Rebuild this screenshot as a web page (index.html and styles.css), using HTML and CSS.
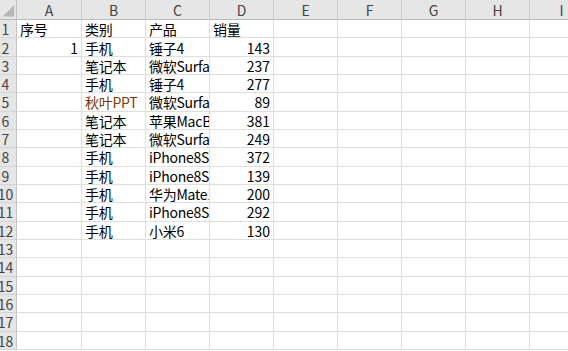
FILE: index.html
```html
<!DOCTYPE html>
<html lang="zh-CN">
<head>
<meta charset="utf-8">
<title>Sheet</title>
<link rel="stylesheet" href="styles.css">
</head>
<body>
<div class="sheet">
  <div class="row head">
    <div class="corner"><svg width="17" height="19" viewBox="0 0 17 19"><polygon points="3,17 15,17 15,5" fill="#b7b7b7"/></svg></div>
    <div class="ch">A</div><div class="ch">B</div><div class="ch">C</div><div class="ch">D</div><div class="ch">E</div><div class="ch">F</div><div class="ch">G</div><div class="ch">H</div><div class="ch">I</div>
  </div>
  <div class="row"><div class="rh">1</div><div class="c">序号</div><div class="c">类别</div><div class="c">产品</div><div class="c">销量</div><div class="c"></div><div class="c"></div><div class="c"></div><div class="c"></div><div class="c"></div></div>
  <div class="row"><div class="rh">2</div><div class="c num">1</div><div class="c">手机</div><div class="c">锤子4</div><div class="c num">143</div><div class="c"></div><div class="c"></div><div class="c"></div><div class="c"></div><div class="c"></div></div>
  <div class="row"><div class="rh">3</div><div class="c"></div><div class="c">笔记本</div><div class="c">微软Surface</div><div class="c num">237</div><div class="c"></div><div class="c"></div><div class="c"></div><div class="c"></div><div class="c"></div></div>
  <div class="row"><div class="rh">4</div><div class="c"></div><div class="c">手机</div><div class="c">锤子4</div><div class="c num">277</div><div class="c"></div><div class="c"></div><div class="c"></div><div class="c"></div><div class="c"></div></div>
  <div class="row"><div class="rh">5</div><div class="c"></div><div class="c brown">秋叶PPT</div><div class="c">微软Surface</div><div class="c num">89</div><div class="c"></div><div class="c"></div><div class="c"></div><div class="c"></div><div class="c"></div></div>
  <div class="row"><div class="rh">6</div><div class="c"></div><div class="c">笔记本</div><div class="c">苹果MacBook</div><div class="c num">381</div><div class="c"></div><div class="c"></div><div class="c"></div><div class="c"></div><div class="c"></div></div>
  <div class="row"><div class="rh">7</div><div class="c"></div><div class="c">笔记本</div><div class="c">微软Surface</div><div class="c num">249</div><div class="c"></div><div class="c"></div><div class="c"></div><div class="c"></div><div class="c"></div></div>
  <div class="row"><div class="rh">8</div><div class="c"></div><div class="c">手机</div><div class="c">iPhone8S</div><div class="c num">372</div><div class="c"></div><div class="c"></div><div class="c"></div><div class="c"></div><div class="c"></div></div>
  <div class="row"><div class="rh">9</div><div class="c"></div><div class="c">手机</div><div class="c">iPhone8S</div><div class="c num">139</div><div class="c"></div><div class="c"></div><div class="c"></div><div class="c"></div><div class="c"></div></div>
  <div class="row"><div class="rh">10</div><div class="c"></div><div class="c">手机</div><div class="c">华为Mate10</div><div class="c num">200</div><div class="c"></div><div class="c"></div><div class="c"></div><div class="c"></div><div class="c"></div></div>
  <div class="row"><div class="rh">11</div><div class="c"></div><div class="c">手机</div><div class="c">iPhone8S</div><div class="c num">292</div><div class="c"></div><div class="c"></div><div class="c"></div><div class="c"></div><div class="c"></div></div>
  <div class="row"><div class="rh">12</div><div class="c"></div><div class="c">手机</div><div class="c">小米6</div><div class="c num">130</div><div class="c"></div><div class="c"></div><div class="c"></div><div class="c"></div><div class="c"></div></div>
  <div class="row"><div class="rh">13</div><div class="c"></div><div class="c"></div><div class="c"></div><div class="c"></div><div class="c"></div><div class="c"></div><div class="c"></div><div class="c"></div><div class="c"></div></div>
  <div class="row"><div class="rh">14</div><div class="c"></div><div class="c"></div><div class="c"></div><div class="c"></div><div class="c"></div><div class="c"></div><div class="c"></div><div class="c"></div><div class="c"></div></div>
  <div class="row"><div class="rh">15</div><div class="c"></div><div class="c"></div><div class="c"></div><div class="c"></div><div class="c"></div><div class="c"></div><div class="c"></div><div class="c"></div><div class="c"></div></div>
  <div class="row"><div class="rh">16</div><div class="c"></div><div class="c"></div><div class="c"></div><div class="c"></div><div class="c"></div><div class="c"></div><div class="c"></div><div class="c"></div><div class="c"></div></div>
  <div class="row"><div class="rh">17</div><div class="c"></div><div class="c"></div><div class="c"></div><div class="c"></div><div class="c"></div><div class="c"></div><div class="c"></div><div class="c"></div><div class="c"></div></div>
  <div class="row"><div class="rh">18</div><div class="c"></div><div class="c"></div><div class="c"></div><div class="c"></div><div class="c"></div><div class="c"></div><div class="c"></div><div class="c"></div><div class="c"></div></div>
</div>
</body>
</html>
```
FILE: styles.css
```css
html, body {
  margin: 0;
  padding: 0;
  background: #ffffff;
  overflow: hidden;
}
.sheet {
  width: 594px;
  font-family: "Noto Sans CJK SC", "Noto Sans", sans-serif;
  font-size: 14px;
  color: #000;
}
.row {
  display: grid;
  grid-template-columns: 17px 65px repeat(8, 64px);
  height: 18.33px;
}
.row.head {
  height: 20px;
}
.row > div {
  box-sizing: border-box;
  overflow: hidden;
  white-space: nowrap;
  display: flex;
  align-items: center;
}
.corner {
  background: #e6e6e6;
  border-right: 1px solid #c4c4c4;
  border-bottom: 1px solid #b9b9b9;
}
.corner svg {
  display: block;
}
.ch {
  background: #e6e6e6;
  border-right: 1px solid #d2d2d2;
  border-bottom: 1px solid #b9b9b9;
  justify-content: center;
  color: #444;
  font-size: 14px;
  padding-top: 1px;
}
.rh {
  background: #e6e6e6;
  border-right: 1px solid #c4c4c4;
  border-bottom: 1px solid #d4d4d4;
  justify-content: center;
  padding-right: 5px;
  color: #444;
  font-size: 14px;
  padding-top: 1px;
  overflow: visible;
}
.c {
  border-right: 1px solid #dedede;
  border-bottom: 1px solid #dedede;
  padding: 1px 3px 0 3px;
  letter-spacing: -0.25px;
}
.c.num {
  justify-content: flex-end;
  padding-right: 3px;
  letter-spacing: 0;
}
.c.brown {
  color: #7a3a0a;
}
```
